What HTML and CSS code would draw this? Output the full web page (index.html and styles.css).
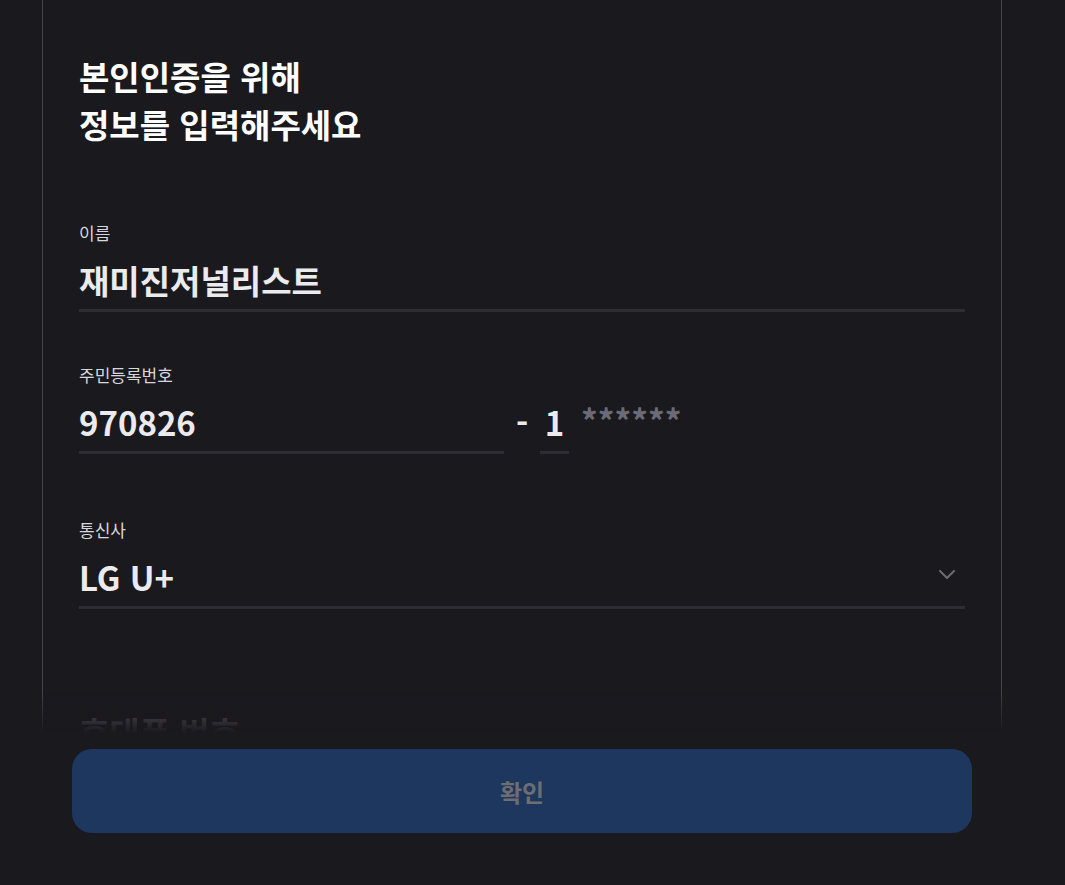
FILE: index.html
```html
<!DOCTYPE html>
<html lang="ko">
<head>
<meta charset="utf-8">
<title>본인인증</title>
<link rel="stylesheet" href="styles.css">
</head>
<body>
<main class="page">
  <h1 class="title">본인인증을 위해<br>정보를 입력해주세요</h1>
  <div class="fields">
    <div class="field">
      <label class="label">이름</label>
      <div class="value">재미진저널리스트</div>
    </div>
    <div class="field gap-sm">
      <label class="label">주민등록번호</label>
      <div class="split">
        <div class="value birth">970826</div>
        <div class="dash">-</div>
        <div class="value gender">1</div>
        <div class="mask">******</div>
      </div>
    </div>
    <div class="field gap-lg">
      <label class="label">통신사</label>
      <div class="value select">
        <span>LG U+</span>
        <svg class="chevron" width="16" height="9" viewBox="0 0 16 9" aria-hidden="true"><path d="M1 1l7 7 7-7" fill="none" stroke="#6b6b75" stroke-width="2" stroke-linecap="round" stroke-linejoin="round"/></svg>
      </div>
    </div>
    <div class="field gap-lg">
      <label class="label hidden">휴대폰 번호</label>
      <div class="value placeholder">휴대폰 번호</div>
    </div>
  </div>
</main>
<div class="bottom">
  <button class="confirm" type="button">확인</button>
</div>
</body>
</html>
```

FILE: styles.css
```css
html, body {
  margin: 0;
  background: #1a191e;
}

body {
  font-family: "Noto Sans CJK KR", "Noto Sans", sans-serif;
}

.page {
  box-sizing: border-box;
  width: 960px;
  margin-left: 42px;
  min-height: 100vh;
  border-left: 1px solid #45444b;
  border-right: 1px solid #45444b;
  padding: 52px 36px 240px 36px;
}

.title {
  margin: 0;
  font-size: 33px;
  font-weight: 700;
  line-height: 48px;
  color: #ffffff;
}

.fields {
  margin-top: 74px;
  display: flex;
  flex-direction: column;
}

.gap-sm { margin-top: 52px; }
.gap-lg { margin-top: 65px; }

.label {
  display: block;
  font-size: 17px;
  line-height: 22px;
  color: #d8d8dc;
}

.label.hidden { visibility: hidden; }

.value {
  margin-top: 16px;
  font-size: 33px;
  font-weight: 700;
  line-height: 40px;
  color: #ebebee;
  padding-bottom: 9px;
  border-bottom: 3px solid #2e2d35;
}

.split {
  display: flex;
  align-items: flex-start;
  margin-top: 16px;
}

.split .value { margin-top: 0; }

.birth { width: 425px; }

.dash {
  width: 36px;
  text-align: center;
  font-size: 33px;
  font-weight: 700;
  line-height: 40px;
  color: #ebebee;
}

.gender {
  width: 29px;
  text-align: center;
}

.mask {
  margin-left: 12px;
  margin-top: -2px;
  font-size: 33px;
  font-weight: 700;
  line-height: 40px;
  letter-spacing: 0;
  color: #6b6b75;
}

.select {
  display: flex;
  justify-content: space-between;
  align-items: center;
}

.chevron {
  margin-right: 10px;
  margin-bottom: 6px;
}

.placeholder {
  color: #62626a;
}

.bottom {
  position: fixed;
  left: 42px;
  bottom: 0;
  box-sizing: border-box;
  width: 960px;
  padding: 16px 30px 52px;
  background: #1a191e;
}

.bottom::before {
  content: "";
  position: absolute;
  left: 0;
  right: 0;
  top: -40px;
  height: 40px;
  background: linear-gradient(to bottom, rgba(26, 25, 30, 0), #1a191e);
}

.confirm {
  display: block;
  width: 100%;
  height: 84px;
  border: 0;
  border-radius: 20px;
  background: #1e375f;
  color: #6d6e74;
  font-family: "Noto Sans CJK KR", "Noto Sans", sans-serif;
  font-size: 24px;
  font-weight: 700;
}
```
